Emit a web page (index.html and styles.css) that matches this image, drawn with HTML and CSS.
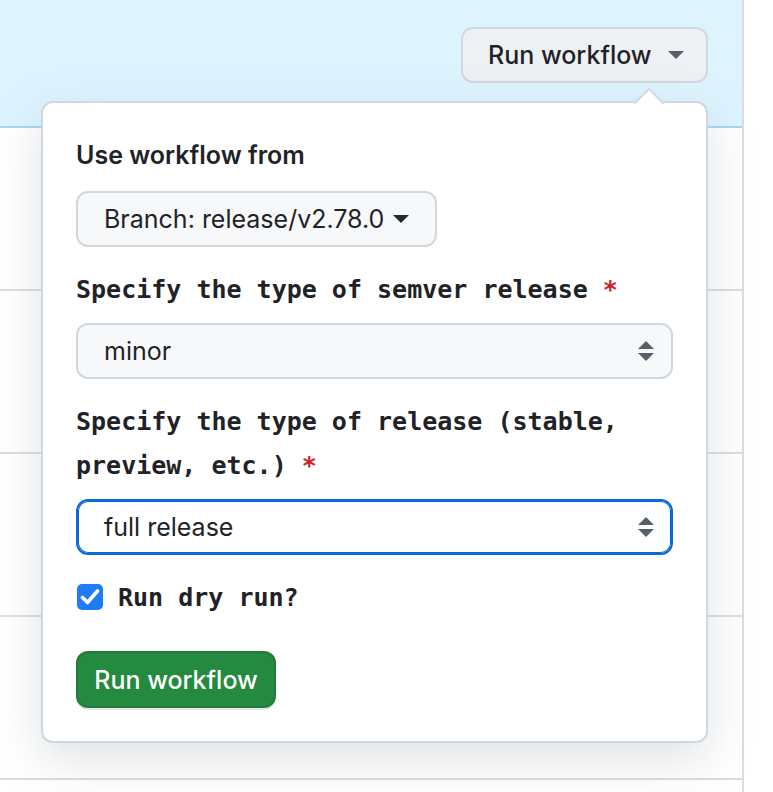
FILE: index.html
```html
<!DOCTYPE html>
<html>
<head>
<meta charset="utf-8">
<link rel="stylesheet" href="styles.css">
</head>
<body>
<div class="page">
  <div class="column">
    <div class="header">
      <div class="dropdown">
        <button class="btn-top">Run workflow <span class="caret caret-top"></span></button>
        <div class="popover">
          <div class="label-sans">Use workflow from</div>
          <button class="branch-btn">Branch: release/v2.78.0 <span class="caret caret-branch"></span></button>
          <div class="label-mono">Specify the type of semver release <span class="req">*</span></div>
          <div class="select">
            <span>minor</span>
            <svg class="updown" width="16" height="20" viewBox="0 0 16 20"><path d="M8 0 L16 8 L0 8 Z M0 12 L16 12 L8 20 Z" fill="#57606a"/></svg>
          </div>
          <div class="label-mono">Specify the type of release (stable,<br>preview, etc.) <span class="req">*</span></div>
          <div class="select select-focus">
            <span>full release</span>
            <svg class="updown" width="16" height="20" viewBox="0 0 16 20"><path d="M8 0 L16 8 L0 8 Z M0 12 L16 12 L8 20 Z" fill="#57606a"/></svg>
          </div>
          <div class="check-row">
            <span class="checkbox"><svg width="20" height="18" viewBox="0 0 20 18"><path d="M2.5 9.5 L7.5 14.5 L17.5 3" fill="none" stroke="#fff" stroke-width="3.6" stroke-linecap="round" stroke-linejoin="round"/></svg></span>
            <span class="check-label">Run dry run?</span>
          </div>
          <button class="btn-green">Run workflow</button>
        </div>
      </div>
    </div>
    <div class="row"></div>
    <div class="row"></div>
    <div class="row"></div>
    <div class="row"></div>
  </div>
</div>
</body>
</html>
```
FILE: styles.css
```css
* { box-sizing: border-box; }
html, body { margin: 0; padding: 0; background: #fff; }
body {
  font-family: Inter, "Noto Sans", sans-serif;
  color: #1f2328;
  width: 773px;
  height: 792px;
  overflow: hidden;
}
.page { display: flex; }
.column {
  width: 744px;
  border-right: 2px solid #d8dee4;
  height: 792px;
  background: #fff;
}
.header {
  height: 128px;
  background: #ddf4ff;
  border-bottom: 2px solid #a9d6f5;
  display: flex;
  justify-content: flex-end;
  padding: 27px 34px 0 0;
}
.row {
  height: 163px;
  border-bottom: 2px solid #d8dee4;
}
.dropdown { position: relative; height: 56px; }
.btn-top {
  height: 56px;
  width: 247px;
  border: 2px solid #d0d7de;
  border-radius: 12px;
  background: #eef1f4;
  font-family: Inter, "Noto Sans", sans-serif;
  font-size: 25px;
  font-weight: 500;
  color: #1f2328;
  display: flex;
  align-items: center;
  padding: 0 0 0 25px;
}
.caret {
  display: inline-block;
  width: 0; height: 0;
  border-left: 8px solid transparent;
  border-right: 8px solid transparent;
  border-top: 8px solid #57606a;
}
.caret-top { margin-left: 16px; }
.caret-branch { margin-left: 9px; border-top-color: #24292f; }
.popover {
  position: absolute;
  top: 74px;
  right: 0;
  width: 667px;
  height: 642px;
  background: #fff;
  border: 2px solid #d0d7de;
  border-radius: 12px;
  box-shadow: 0 16px 48px rgba(140, 149, 159, 0.28);
  padding: 30px 33px 0 33px;
  z-index: 5;
}
.popover::before {
  content: "";
  position: absolute;
  top: -11px;
  left: 595px;
  width: 20px;
  height: 20px;
  background: #fff;
  border-top: 2px solid #d0d7de;
  border-left: 2px solid #d0d7de;
  transform: rotate(45deg);
}
.label-sans {
  font-size: 25px;
  font-weight: 600;
  line-height: 44px;
  height: 44px;
}
.branch-btn {
  margin-top: 14px;
  height: 56px;
  border: 2px solid #d0d7de;
  border-radius: 12px;
  background: #f6f8fa;
  font-family: Inter, "Noto Sans", sans-serif;
  font-size: 25px;
  font-weight: 400;
  color: #1f2328;
  display: flex;
  align-items: center;
  padding: 0 26px 0 26px;
}
.label-mono {
  margin-top: 21px;
  font-family: "DejaVu Sans Mono", "Liberation Mono", monospace;
  font-size: 25px;
  font-weight: 700;
  line-height: 44px;
}
.req { color: #cf222e; }
.select {
  margin-top: 11px;
  height: 56px;
  border: 2px solid #d0d7de;
  border-radius: 12px;
  background: #f6f8fa;
  display: flex;
  align-items: center;
  justify-content: space-between;
  padding: 0 17px 0 26px;
  font-size: 25px;
}
.select-focus {
  background: #fff;
  border: 2px solid #0969da;
  box-shadow: inset 0 0 0 1px #0969da;
}
.check-row {
  margin-top: 20px;
  height: 44px;
  display: flex;
  align-items: center;
  gap: 15px;
  padding-left: 1px;
}
.checkbox {
  width: 26px;
  height: 26px;
  border-radius: 5px;
  background: #1f7cf4;
  display: flex;
  align-items: center;
  justify-content: center;
}
.check-label {
  font-family: "DejaVu Sans Mono", "Liberation Mono", monospace;
  font-size: 25px;
  font-weight: 700;
}
.btn-green {
  margin-top: 32px;
  height: 57px;
  width: 200px;
  border: 2px solid rgba(31, 35, 40, 0.15);
  border-radius: 12px;
  background: #238a3f;
  color: #fff;
  font-family: Inter, "Noto Sans", sans-serif;
  font-size: 25px;
  font-weight: 500;
  display: flex;
  align-items: center;
  justify-content: center;
  box-shadow: 0 2px 0 rgba(31, 35, 40, 0.1);
}
```
